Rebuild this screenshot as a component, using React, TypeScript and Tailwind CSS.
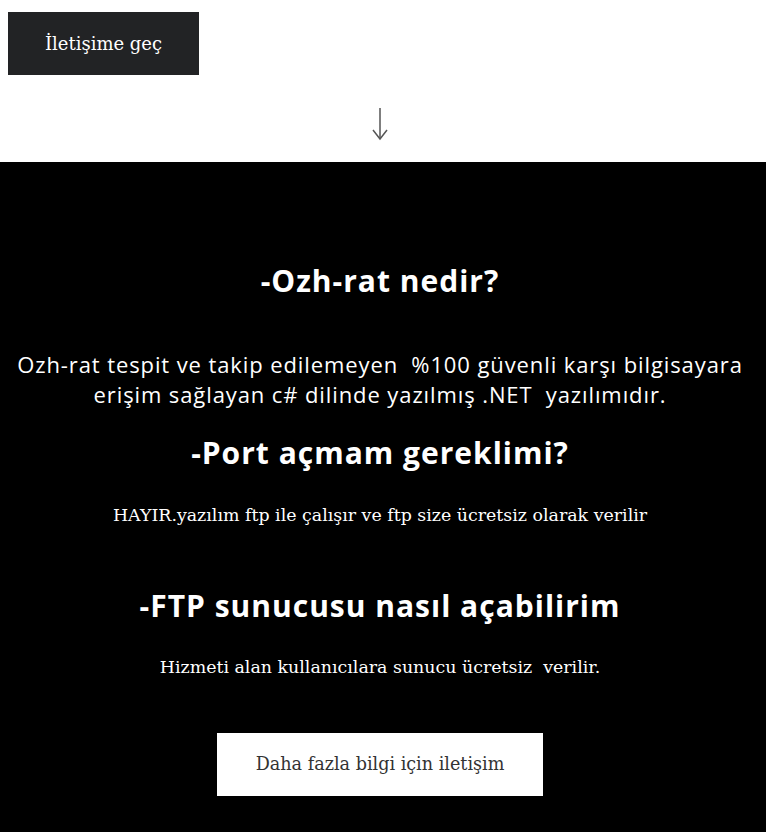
import * as React from 'react';

const sans = "font-['Open_Sans',sans-serif]";
const serif = "font-['DejaVu_Serif',serif]";

export default function App() {
  return (
    <div className="min-h-[832px] bg-white">
      <div className="px-2 pt-3">
        <button className={`w-[191px] h-[63px] bg-[#222325] text-white text-[18px] ${serif}`}>
          İletişime geç
        </button>
      </div>
      <div className="flex justify-center pt-[32px] pb-[21px] pr-[6px]">
        {/* aşağı ok */}
        <svg width="20" height="34" viewBox="0 0 20 34" fill="none" stroke="#555" strokeWidth="1.5">
          <path d="M10 1 V32" />
          <path d="M3 23 L10 32 L17 23" />
        </svg>
      </div>
      <div className="bg-black text-white text-center pt-[99px] pb-[36px] pr-[6px]">
        <h2 className={`${sans} font-bold text-[30px] leading-[40px] tracking-[1px]`}>-Ozh-rat nedir?</h2>
        <p className={`${sans} text-[22px] leading-[30px] tracking-[0.9px] mt-[48px] whitespace-pre-wrap`}>
          Ozh-rat tespit ve takip edilemeyen  %100 güvenli karşı bilgisayara
          <br />
          erişim sağlayan c# dilinde yazılmış .NET  yazılımıdır.
        </p>
        <h2 className={`${sans} font-bold text-[30px] leading-[40px] tracking-[1px] mt-[24px]`}>-Port açmam gereklimi?</h2>
        <p className={`${serif} text-[17.4px] leading-[28px] mt-[28px]`}>
          HAYIR.yazılım ftp ile çalışır ve ftp size ücretsiz olarak verilir
        </p>
        <h2 className={`${sans} font-bold text-[30px] leading-[40px] tracking-[1px] mt-[57px]`}>-FTP sunucusu nasıl açabilirim</h2>
        <p className={`${serif} text-[17.4px] leading-[28px] mt-[27px] whitespace-pre-wrap`}>
          Hizmeti alan kullanıcılara sunucu ücretsiz  verilir.
        </p>
        <div className="flex justify-center mt-[52px]">
          <button className={`w-[326px] h-[63px] bg-white text-[#333] text-[17.6px] ${serif}`}>
            Daha fazla bilgi için iletişim
          </button>
        </div>
      </div>
    </div>
  );
}
